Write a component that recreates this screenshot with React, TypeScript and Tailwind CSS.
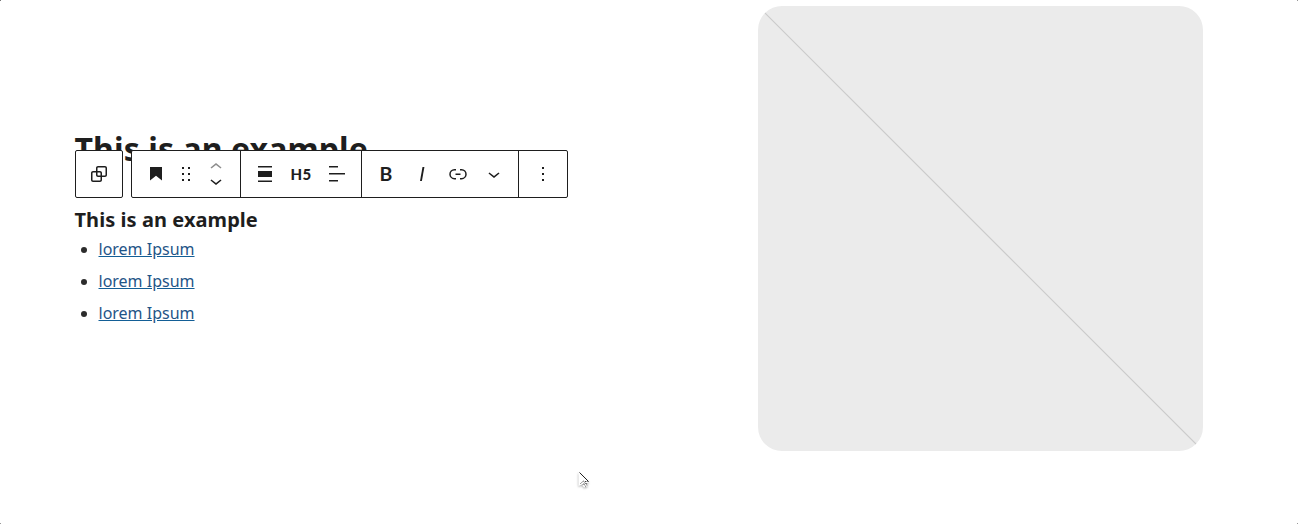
import type { ReactNode } from "react";

const ink = "#1e1e1e";

function Icon({ d, className = "" }: { d: string; className?: string }) {
  return (
    <svg viewBox="0 0 24 24" width="24" height="24" fill={ink} className={`block shrink-0 ${className}`} aria-hidden="true">
      <path fillRule="evenodd" d={d} />
    </svg>
  );
}

const icons = {
  group:
    "M18 4h-7c-1.1 0-2 .9-2 2v3H6c-1.1 0-2 .9-2 2v7c0 1.1.9 2 2 2h7c1.1 0 2-.9 2-2v-3h3c1.1 0 2-.9 2-2V6c0-1.1-.9-2-2-2zm-4.5 14c0 .3-.2.5-.5.5H6c-.3 0-.5-.2-.5-.5v-7c0-.3.2-.5.5-.5h3V13c0 1.1.9 2 2 2h2.5v3zm0-4.5H11c-.3 0-.5-.2-.5-.5v-2.5H13c.3 0 .5.2.5.5v2.5zm5-.5c0 .3-.2.5-.5.5h-3V11c0-1.1-.9-2-2-2h-2.5V6c0-.3.2-.5.5-.5h7c.3 0 .5.2.5.5v7z",
  heading: "M6 5V18.5911L12 13.8473L18 18.5911V5H6Z",
  drag: "M8 7h2V5H8v2zm0 6h2v-2H8v2zm0 6h2v-2H8v2zm6-14v2h2V5h-2zm0 8h2v-2h-2v2zm0 6h2v-2h-2v2z",
  up: "M6.5 12.4L12 8l5.5 4.4-.9 1.2L12 10l-4.5 3.6-1-1.2z",
  down: "M17.5 11.6L12 16l-5.5-4.4.9-1.2L12 14l4.5-3.6 1 1.2z",
  alignNone: "M19 5.5H5V4h14v1.5ZM19 20H5v-1.5h14V20ZM5 9h14v6H5V9Z",
  alignLeft: "M13 5.5H4V4h9v1.5Zm7 7H4V11h16v1.5Zm-7 7H4V18h9v1.5Z",
  italic: "M12.5 5L10 19h1.9l2.5-14z",
  link: "M10 17.389H8.444A5.194 5.194 0 1 1 8.444 7H10v1.5H8.444a3.694 3.694 0 0 0 0 7.389H10v1.5ZM14 7h1.556a5.194 5.194 0 0 1 0 10.39H14v-1.5h1.556a3.694 3.694 0 0 0 0-7.39H14V7Zm-4.5 6h5v-1.5h-5V13Z",
  more: "M13 19h-2v-2h2v2zm0-6h-2v-2h2v2zm0-6h-2V5h2v2z",
};

function Tool({ label, children }: { label: string; children: ReactNode }) {
  return (
    <button aria-label={label} className="flex h-full w-9 items-center justify-center">
      {children}
    </button>
  );
}

function BlockToolbar() {
  return (
    <div className="absolute top-[150px] left-[75px] flex h-12 gap-2 text-[#1e1e1e]">
      <button aria-label="Select parent block" className="flex w-12 items-center justify-center rounded-xs border border-[#1e1e1e] bg-white">
        <Icon d={icons.group} />
      </button>
      <div className="flex w-[437px] rounded-xs border border-[#1e1e1e] bg-white">
        <div className="flex w-[109px] items-center border-r border-[#1e1e1e] pl-3">
          <Icon d={icons.heading} />
          <Icon d={icons.drag} className="ml-1.5" />
          <div className="ml-1.5 flex h-full w-6 flex-col">
            <div className="flex h-[23px] items-end overflow-hidden opacity-50">
              <Icon d={icons.up} className="translate-y-[5px]" />
            </div>
            <div className="flex h-[23px] items-start overflow-hidden">
              <Icon d={icons.down} className="-translate-y-[5px]" />
            </div>
          </div>
        </div>
        <div className="flex w-[121px] items-center border-r border-[#1e1e1e] pl-1.5">
          <Tool label="Align"><Icon d={icons.alignNone} /></Tool>
          <Tool label="Change level">
            <span className="pt-px font-[Lato,sans-serif] text-[15px] leading-none font-black tracking-[0.3px]">H5</span>
          </Tool>
          <Tool label="Align text"><Icon d={icons.alignLeft} /></Tool>
        </div>
        <div className="flex w-[157px] items-center border-r border-[#1e1e1e] pl-1.5">
          <Tool label="Bold">
            <span className="pb-px font-[Lato,sans-serif] text-[19.5px] leading-none font-bold">B</span>
          </Tool>
          <Tool label="Italic"><Icon d={icons.italic} /></Tool>
          <Tool label="Link"><Icon d={icons.link} /></Tool>
          <Tool label="More"><Icon d={icons.down} /></Tool>
        </div>
        <div className="flex flex-1 items-center justify-center">
          <Icon d={icons.more} />
        </div>
      </div>
    </div>
  );
}

const links = ["lorem Ipsum", "lorem Ipsum", "lorem Ipsum"];

export default function App() {
  return (
    <main className="relative flex h-[524px] w-[1298px] overflow-hidden bg-white font-['Noto_Sans',sans-serif] text-[#1e1e1e]">
      <section className="w-[683px] pt-[129px] pl-[74.5px]">
        <h2 className="text-[32px] leading-10 font-bold tracking-[0.1px]">This is an example</h2>
        <h5 className="mt-[37px] text-[20px] leading-7 font-bold tracking-[0.06px]">This is an example</h5>
        <ul className="-mt-px">
          {links.map((text, i) => (
            <li key={i} className="flex h-8 items-center">
              <span className="mt-px ml-[6.5px] size-[6px] rounded-full bg-[#2c2c2c]" />
              <a href="#" className="ml-[11.5px] text-base text-[#1f5587] underline decoration-[#135e96]">{text}</a>
            </li>
          ))}
        </ul>
      </section>
      <figure className="mt-1.5 ml-[75px] h-[445px] w-[445px] overflow-hidden rounded-3xl bg-[#ebebeb]">
        <svg viewBox="0 0 445 445" className="block size-full" aria-hidden="true">
          <path d="M0 0L445 445" stroke="#cacaca" strokeWidth="1.2" />
        </svg>
      </figure>
      <BlockToolbar />
      <svg className="absolute top-[469px] left-[575px]" width="20" height="24" viewBox="0 0 20 24" aria-hidden="true">
        <path d="M3.5 3V17L7 15.5L9 18.5L13 17L11.5 14.5L14 13Z" fill="#fff" className="drop-shadow-[0_1px_1px_rgba(0,0,0,0.35)]" />
        <path d="M4.5 3.5L13.5 12.5" stroke="#222" fill="none" />
        <path d="M5.5 14.5L8.5 12L10.5 14.5M7.5 16L9 14.5L10.5 17.5M10 12.5H13.5M11 14L12 16.5" stroke="#222" strokeWidth="0.9" strokeDasharray="1 .6" fill="none" />
      </svg>
      <span className="absolute top-0 left-0 size-px bg-[#777]" />
      <span className="absolute right-0 bottom-0 size-px bg-[#999]" />
      <span className="absolute top-0 right-0 size-px bg-[#999]" />
      <span className="absolute bottom-0 left-0 size-px bg-[#999]" />
    </main>
  );
}
